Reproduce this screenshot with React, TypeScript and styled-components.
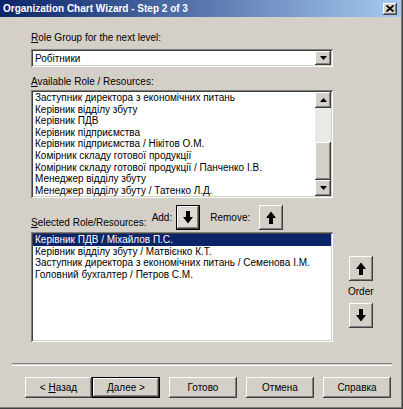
import styled, { createGlobalStyle } from "styled-components";

const GlobalStyle = createGlobalStyle`
  html, body {
    margin: 0;
    padding: 0;
    background: #d4d0c8;
  }
  body {
    font-family: "Liberation Sans", Arial, sans-serif;
  }
`;

const raised = `
  background: #d4d0c8;
  box-shadow: inset -1px -1px #404040, inset 1px 1px #ffffff,
    inset -2px -2px #808080, inset 2px 2px #d4d0c8;
`;

const sunken = `
  background: #ffffff;
  box-shadow: inset 1px 1px #808080, inset -1px -1px #ffffff,
    inset 2px 2px #404040, inset -2px -2px #d4d0c8;
`;

const Window = styled.div`
  width: 403px;
  height: 409px;
  box-sizing: border-box;
  background: #d4d0c8;
  border-right: 1px solid #404040;
  border-bottom: 1px solid #404040;
  box-shadow: inset -1px -1px #808080;
  display: flex;
  flex-direction: column;
  font-size: 10px;
  color: #000;
  overflow: hidden;
`;

const TitleBar = styled.div`
  height: 17px;
  flex: none;
  display: flex;
  align-items: center;
  justify-content: space-between;
  padding: 0 4px 0 3px;
  margin-right: 1px;
  background: linear-gradient(to right, #0a246a, #a6caf0);
  color: #fff;
  font-weight: bold;
  font-size: 10px;
`;

const CloseButton = styled.div`
  width: 14px;
  height: 12px;
  ${raised};
  display: flex;
  align-items: center;
  justify-content: center;
`;

const Body = styled.div`
  padding: 15px 0 0 31px;
  display: flex;
  flex-direction: column;
`;

const Label = styled.div<{ $gap?: number }>`
  line-height: 12px;
  height: 12px;
  margin-top: ${(p) => p.$gap ?? 0}px;
  white-space: nowrap;
`;

const Combo = styled.div`
  width: 302px;
  height: 18px;
  margin-top: 5px;
  box-sizing: border-box;
  ${sunken};
  display: flex;
  align-items: center;
  padding: 2px 2px 2px 4px;
`;

const ComboText = styled.span`
  flex: 1;
`;

const SmallButton = styled.div`
  width: 16px;
  height: 14px;
  flex: none;
  ${raised};
  display: flex;
  align-items: center;
  justify-content: center;
`;

const ListBox = styled.div<{ $height: number; $gap?: number }>`
  width: 302px;
  height: ${(p) => p.$height}px;
  margin-top: ${(p) => p.$gap ?? 0}px;
  box-sizing: border-box;
  ${sunken};
  padding: 2px;
  display: flex;
`;

const Items = styled.div`
  flex: 1;
  overflow: hidden;
`;

const Item = styled.div<{ $selected?: boolean }>`
  line-height: 11.6px;
  height: 11.6px;
  padding-left: 2px;
  white-space: nowrap;
  background: ${(p) => (p.$selected ? "#0a246a" : "transparent")};
  color: ${(p) => (p.$selected ? "#fff" : "#000")};
`;

const ScrollBar = styled.div`
  width: 16px;
  display: flex;
  flex-direction: column;
`;

const ScrollButton = styled(SmallButton)`
  height: 16px;
`;

const Track = styled.div`
  flex: 1;
  background: #ebe9e4;
  display: flex;
  flex-direction: column;
  justify-content: flex-end;
`;

const Thumb = styled.div`
  height: 38px;
  ${raised};
`;

const ActionRow = styled.div`
  width: 302px;
  height: 34px;
  display: flex;
  align-items: flex-start;
  padding-top: 7px;
  box-sizing: border-box;
`;

const SelectedLabel = styled(Label)`
  align-self: flex-end;
  margin-bottom: 3px;
`;

const ActionGroup = styled.div`
  display: flex;
  align-items: center;
  gap: 4px;
  margin-left: 5px;
  & + & {
    margin-left: 10px;
    gap: 9px;
  }
`;

const ArrowButton = styled.div<{ $focused?: boolean }>`
  width: 24px;
  height: 25px;
  box-sizing: border-box;
  ${raised};
  display: flex;
  align-items: center;
  justify-content: center;
  ${(p) =>
    p.$focused &&
    `
    border: 1px solid #000;
    background: #dedbd4;
  `}
`;

const SelectedArea = styled.div`
  display: flex;
`;

const OrderColumn = styled.div`
  display: flex;
  flex-direction: column;
  align-items: center;
  margin-left: 15px;
  padding-top: 24px;
`;

const OrderLabel = styled.div`
  line-height: 12px;
  margin: 5px 0 5px;
`;

const Footer = styled.div`
  margin-top: 21px;
  padding: 0 10px 0 12px;
`;

const Separator = styled.div`
  height: 1px;
  border-top: 1px solid #808080;
  border-bottom: 1px solid #ffffff;
`;

const ButtonRow = styled.div`
  display: flex;
  padding: 11px 0 0 13px;
`;

const PushButton = styled.div<{ $default?: boolean; $gap?: number; $width?: number }>`
  width: ${(p) => p.$width ?? 68}px;
  height: 21px;
  box-sizing: border-box;
  margin-left: ${(p) => p.$gap ?? 9}px;
  ${raised};
  display: flex;
  align-items: center;
  justify-content: center;
  white-space: pre;
  ${(p) => p.$default && `border: 1px solid #000;`}
`;

const ArrowDown = () => (
  <svg width="10" height="13" viewBox="0 0 10 13">
    <polygon points="3,0 7,0 7,6 10,6 5,12.5 0,6 3,6" fill="#000" />
  </svg>
);

const ArrowUp = () => (
  <svg width="10" height="13" viewBox="0 0 10 13">
    <polygon points="5,0.5 10,7 7,7 7,13 3,13 3,7 0,7" fill="#000" />
  </svg>
);

const Caret = ({ up }: { up?: boolean }) => (
  <svg width="7" height="4" viewBox="0 0 7 4">
    <polygon points={up ? "3.5,0 7,4 0,4" : "0,0 7,0 3.5,4"} fill="#000" />
  </svg>
);

const available = [
  "Заступник директора з економічних питань",
  "Керівник відділу збуту",
  "Керівник ПДВ",
  "Керівник підприємства",
  "Керівник підприємства / Нікітов О.М.",
  "Комірник складу готової продукції",
  "Комірник складу готової продукції / Панченко І.В.",
  "Менеджер відділу збуту",
  "Менеджер відділу збуту / Татенко Л.Д.",
];

const selected = [
  "Керівник ПДВ / Міхайлов П.С.",
  "Керівник відділу збуту / Матвієнко К.Т.",
  "Заступник директора з економічних питань / Семенова І.М.",
  "Головний бухгалтер / Петров С.М.",
];

export default function App() {
  return (
    <>
      <GlobalStyle />
      <Window>
        <TitleBar>
          <span>Organization Chart Wizard - Step 2 of 3</span>
          <CloseButton>
            <svg width="8" height="7" viewBox="0 0 8 7">
              <path d="M0.5 0.5 L7.5 6.5 M7.5 0.5 L0.5 6.5" stroke="#000" strokeWidth="1.7" />
            </svg>
          </CloseButton>
        </TitleBar>
        <Body>
          <Label>
            <u>R</u>ole Group for the next level:
          </Label>
          <Combo>
            <ComboText>Робітники</ComboText>
            <SmallButton>
              <Caret />
            </SmallButton>
          </Combo>
          <Label $gap={9}>
            <u>A</u>vailable Role / Resources:
          </Label>
          <ListBox $height={108} $gap={2}>
            <Items>
              {available.map((a) => (
                <Item key={a}>{a}</Item>
              ))}
            </Items>
            <ScrollBar>
              <ScrollButton>
                <Caret up />
              </ScrollButton>
              <Track>
                <Thumb />
              </Track>
              <ScrollButton>
                <Caret />
              </ScrollButton>
            </ScrollBar>
          </ListBox>
          <ActionRow>
            <SelectedLabel>
              <u>S</u>elected Role/Resources:
            </SelectedLabel>
            <ActionGroup>
              <span>Add:</span>
              <ArrowButton $focused>
                <ArrowDown />
              </ArrowButton>
            </ActionGroup>
            <ActionGroup>
              <span>Remove:</span>
              <ArrowButton>
                <ArrowUp />
              </ArrowButton>
            </ActionGroup>
          </ActionRow>
          <SelectedArea>
            <ListBox $height={110}>
              <Items>
                {selected.map((s, i) => (
                  <Item key={s} $selected={i === 0}>
                    {s}
                  </Item>
                ))}
              </Items>
            </ListBox>
            <OrderColumn>
              <ArrowButton>
                <ArrowUp />
              </ArrowButton>
              <OrderLabel>Order</OrderLabel>
              <ArrowButton>
                <ArrowDown />
              </ArrowButton>
            </OrderColumn>
          </SelectedArea>
        </Body>
        <Footer>
          <Separator />
          <ButtonRow>
            <PushButton $gap={0} $width={67}>
              {"< "}
              <u>Н</u>азад
            </PushButton>
            <PushButton $gap={0} $default>
              <u>Д</u>алее{" >"}
            </PushButton>
            <PushButton>Готово</PushButton>
            <PushButton>Отмена</PushButton>
            <PushButton>Справка</PushButton>
          </ButtonRow>
        </Footer>
      </Window>
    </>
  );
}
